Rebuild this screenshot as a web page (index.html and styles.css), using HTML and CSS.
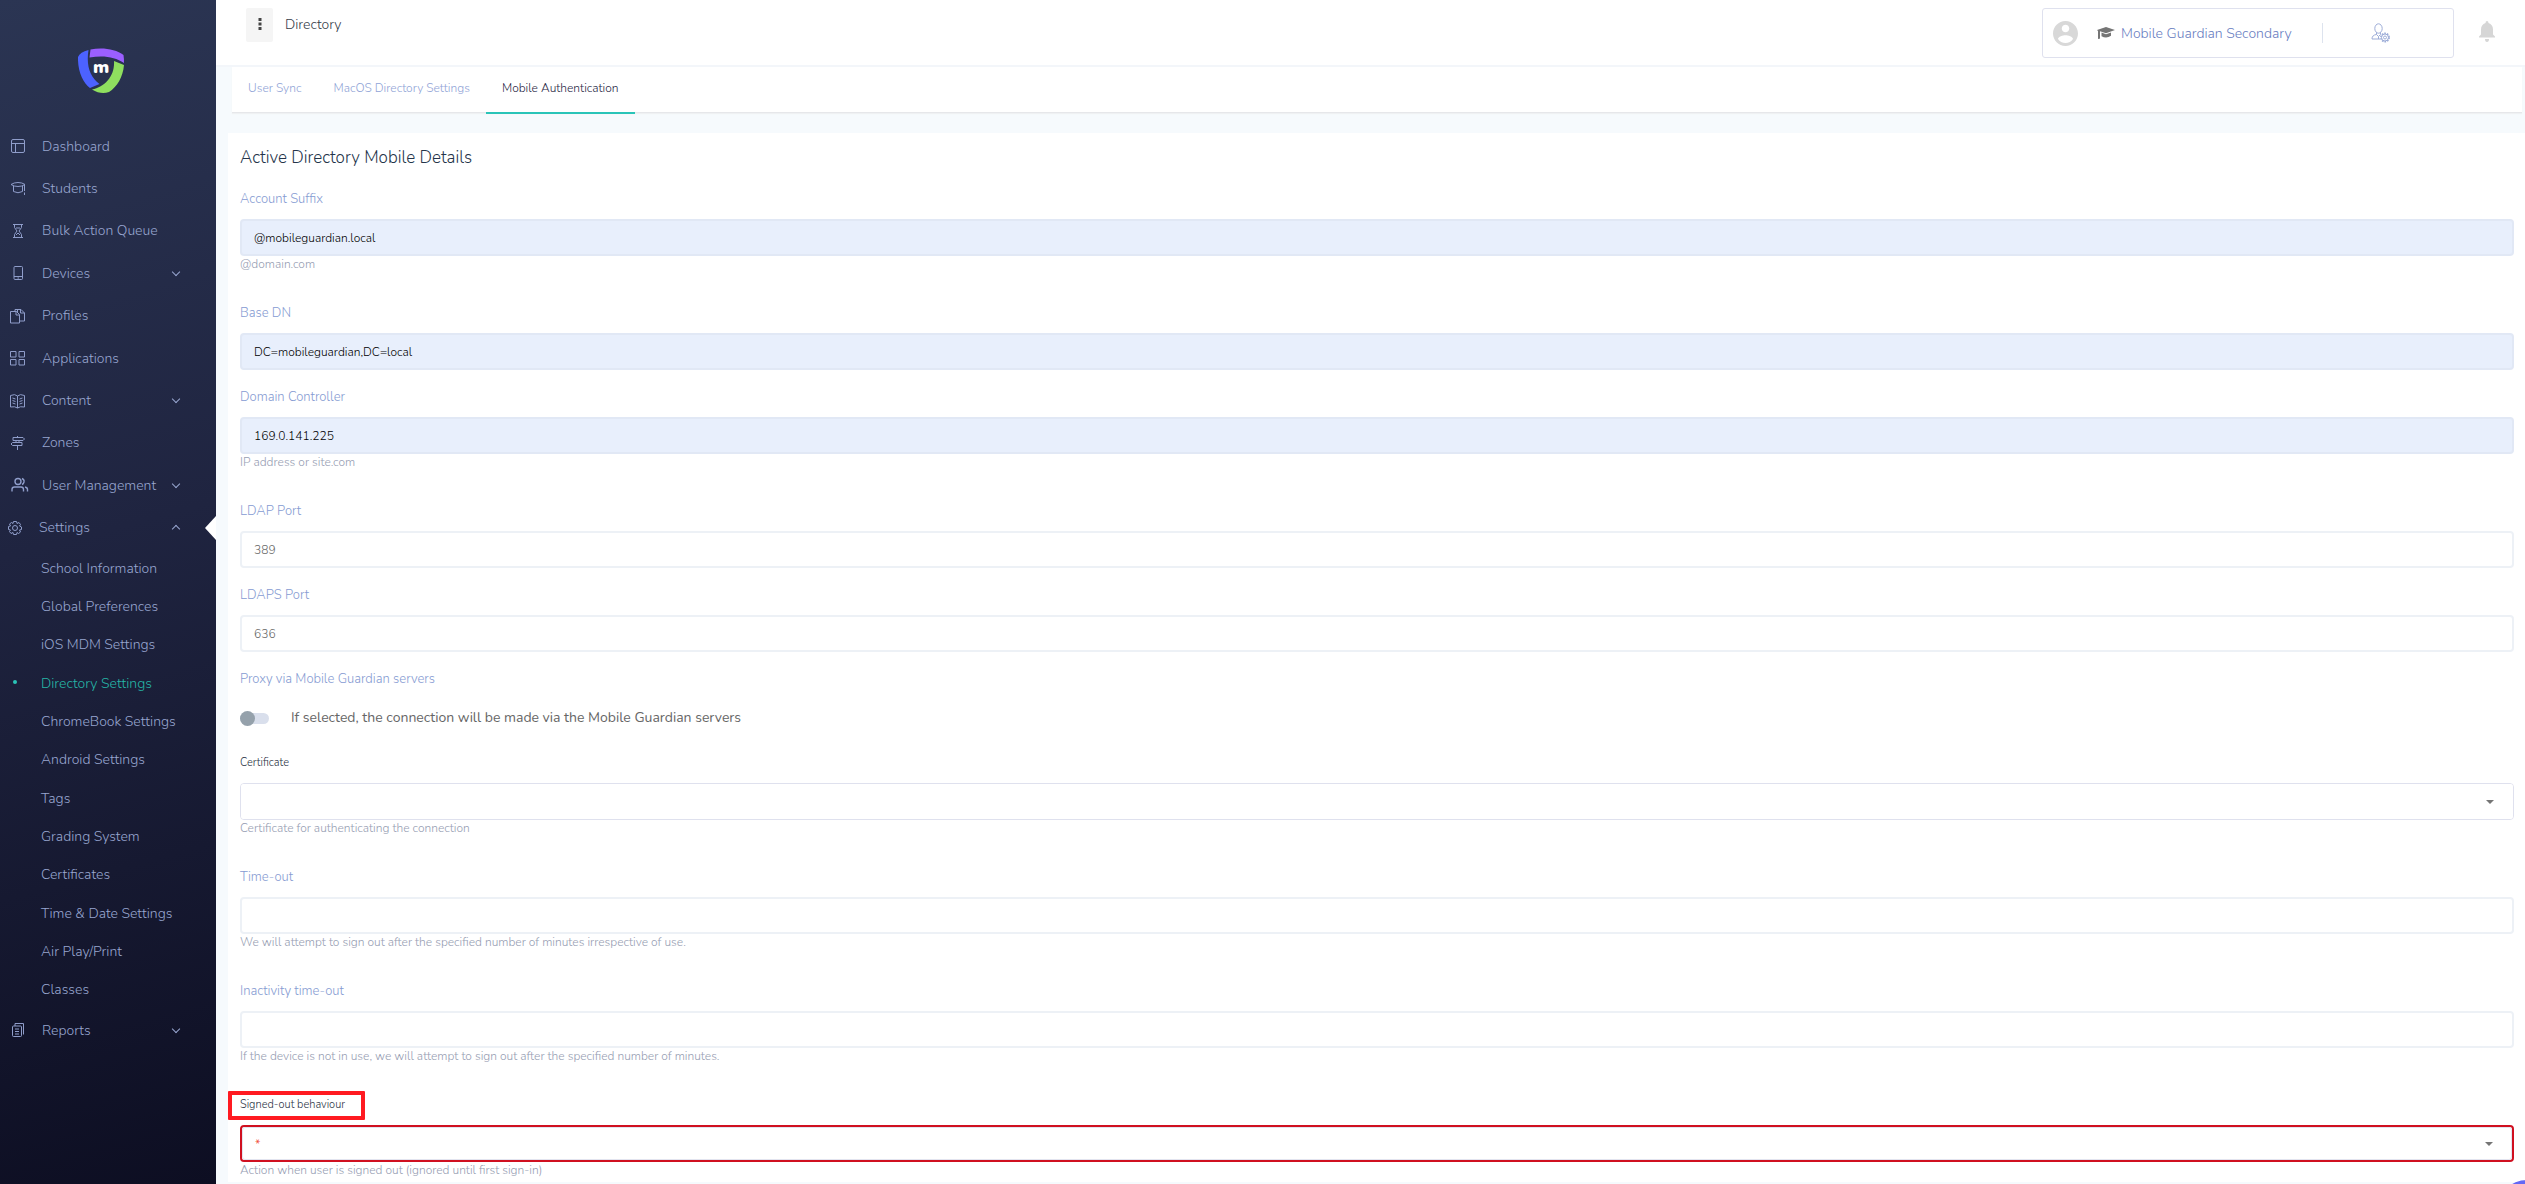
FILE: index.html
```html
<!DOCTYPE html>
<html lang="en">
<head>
<meta charset="utf-8">
<title>Directory</title>
<link rel="stylesheet" href="styles.css">
</head>
<body>
<aside class="sidebar">
  <a class="logo" href="#" aria-label="Home">
    <svg width="46" height="46" viewBox="0 0 46 46">
      <path d="M10.500 2Q2 4 0 9C-.5 23 5 35 12 40L21.500 36C12 29 8 18 10.500 2Z" fill="#4c62ff"/>
      <path d="M12.500 1.500C24-1 38 1 45.500 7Q46 10 46 15C37 9 26 7 11.500 9.500Z" fill="#9b5fff"/>
      <path d="M36 13L46 17C45 29 39 39 31 44Q23 47 14 41.500C27 39 37 28 36 13Z" fill="#8fdf5f"/>
      <text class="logo-letter" x="23" y="25" text-anchor="middle">m</text>
    </svg>
  </a>
  <nav class="nav">
    <ul class="nav-list nav-main">
      <li><a href="#"><svg viewBox="0 0 16 16"><rect x="1.500" y="1.500" width="13" height="13" rx="1.500"/><path d="M1.500 5.500H14.500M5.500 5.500V14.500"/></svg>Dashboard</a></li>
      <li><a href="#"><svg viewBox="0 0 16 16"><path d="M1 3.500Q4 1.500 8 1.500T15 3.500Q12 5.500 8 5.500T1 3.500ZM3.500 5V10.500Q8 13 12.500 10.500V5M14.500 4V10M14.500 11.500V14"/></svg>Students</a></li>
      <li><a href="#"><svg viewBox="0 0 16 16"><path d="M3 1.500H13M3 14.500H13M4.500 1.500V4.500L7 8L4.500 11.500V14.500M11.500 1.500V4.500L9 8L11.500 11.500V14.500M6 5H10M6 12L8 10L10 12"/></svg>Bulk Action Queue</a></li>
      <li><a href="#"><svg viewBox="0 0 16 16"><rect x="4" y="1.500" width="8.500" height="13" rx="1"/><path d="M4 11.500H12.500M7.500 13H9"/></svg>Devices<span class="chevron"></span></a></li>
      <li><a href="#"><svg viewBox="0 0 16 16"><path d="M.500 3.500H6.500L9.500 6.500V15H.500ZM6 3.500V7H9.500M5 3V1.500H11L14.500 5V13H9.500M10.500 1.500V5H14.500M7.500 1.500V4"/></svg>Profiles</a></li>
      <li><a href="#"><svg viewBox="0 0 16 16"><path d="M.500 1.500H6V7H.500ZM9 1.500H14.500V7H9ZM.500 9.500H6V15H.500ZM9 9.500H14.500V15H9Z"/></svg>Applications</a></li>
      <li><a href="#"><svg viewBox="0 0 16 16"><path d="M.500 2.500Q5 .500 7.500 3Q10 .500 14.500 2.500V14Q10 13 7.500 15Q5 13 .500 14ZM7.500 3V15M2.500 5L5.500 6M2.500 7.500L5.500 8.500M2.500 10L5.500 11M12.500 5L9.500 6M12.500 7.500L9.500 8.500M12.500 10L9.500 11"/></svg>Content<span class="chevron"></span></a></li>
      <li><a href="#"><svg viewBox="0 0 16 16"><path d="M3 2.500H13L14.500 4L13 5.500H3ZM12 7.500H2.500L1 9L2.500 10.500H12ZM7.500 1V2.500M6 5.500V7.500M9 5.500V7.500M7.500 10.500V15"/></svg>Zones</a></li>
      <li><a href="#"><svg class="icon-bold" viewBox="0 0 16 16"><circle cx="8" cy="4.500" r="3"/><path d="M2 14.500V12.500Q2 10 4.500 10H11Q13.500 10 13.500 12.500V14.500M12 1.500Q14.500 2.500 14 5Q13.500 7 12 7.500M15 10Q17.500 10.500 17.500 12.500V14.500"/></svg>User Management<span class="chevron"></span></a></li>
      <li class="nav-open"><a href="#"><svg viewBox="0 0 16 16"><circle cx="8" cy="8" r="2.500"/><path d="M6.500 1.500H9.500L10 3.500L12 2.500L13.500 4.500L12.500 6L14.500 7V9.500L12.500 10L13.500 12L11.500 13.500L10 12.500L9.500 14.500H6.500L6 12.500L4 13.500L2.500 11.500L3.500 10L1.500 9.500V6.500L3.500 6L2.500 4L4.500 2.500L6 3.500Z"/></svg>Settings<span class="chevron chevron-up"></span></a></li>
    </ul>
    <ul class="nav-list nav-sub">
      <li><a href="#">School Information</a></li>
      <li><a href="#">Global Preferences</a></li>
      <li><a href="#">iOS MDM Settings</a></li>
      <li class="nav-active"><a href="#">Directory Settings</a></li>
      <li><a href="#">ChromeBook Settings</a></li>
      <li><a href="#">Android Settings</a></li>
      <li><a href="#">Tags</a></li>
      <li><a href="#">Grading System</a></li>
      <li><a href="#">Certificates</a></li>
      <li><a href="#">Time &amp; Date Settings</a></li>
      <li><a href="#">Air Play/Print</a></li>
      <li><a href="#">Classes</a></li>
    </ul>
    <ul class="nav-list nav-last">
      <li><a href="#"><svg viewBox="0 0 16 16"><rect x="2.500" y="4" width="9" height="10.500" rx="1"/><path d="M5 1.500H13.500V12.500M5 1.500V4M5 7H9M5 9.500H9M5 12H9"/></svg>Reports<span class="chevron"></span></a></li>
    </ul>
  </nav>
</aside>

<div class="page">
  <header class="topbar">
    <button class="menu-button" type="button" aria-label="Menu"><svg width="4" height="12" viewBox="0 0 4 12"><path d="M.500 0h3v3h-3zM.500 4.500h3v3h-3zM.500 9h3v3h-3z" fill="#444"/></svg></button>
    <h1 class="page-title">Directory</h1>
    <div class="account">
      <svg class="avatar" width="25" height="25" viewBox="2 2 20 20"><path fill="#d8d8d8" d="M12 2C6.480 2 2 6.480 2 12s4.480 10 10 10 10-4.480 10-10S17.520 2 12 2zm0 3c1.660 0 3 1.340 3 3s-1.340 3-3 3-3-1.340-3-3 1.340-3 3-3zm0 14.600c-2.500 0-4.710-1.280-6-3.220.03-1.990 4-3.080 6-3.080 1.990 0 5.970 1.090 6 3.080-1.290 1.940-3.500 3.220-6 3.220z"/></svg>
      <a class="school" href="#"><svg width="18" height="14" viewBox="0 0 18 14"><path fill="#757575" d="M9 1L18 4L9 7.200L3 5.200V12.500H3.500L1 13V5L0 4ZM4.500 6.500L9 8.200L14 6.500V9.800Q9.500 13 4.500 10.200Z"/></svg>Mobile Guardian Secondary</a>
      <button class="user-settings" type="button" aria-label="User settings"><svg width="20" height="20" viewBox="0 0 20 20" fill="none" stroke="#9dadd8"><ellipse cx="7.500" cy="5.500" rx="3.700" ry="4.700"/><path d="M5.500 9.500V11.500Q1 12 1 16H9M9.500 9.500V11.500M5.500 11.500L7.500 13.500L9.500 11.500M7.500 13.500V16"/><circle cx="14" cy="14.500" r="4.200" stroke-width="1.500" stroke-dasharray="1.650 1"/><circle cx="14" cy="14.500" r="3.500"/><circle cx="14" cy="14.500" r="1.500"/></svg></button>
    </div>
    <button class="bell" type="button" aria-label="Notifications"><svg width="16" height="21" viewBox="0 0 16 21"><path fill="#d6d6d6" d="M8 0Q9.500 0 9.500 2Q14 3.500 14 8.500V13.500L16 15.500V16.500H0V15.500L2 13.500V8.500Q2 3.500 6.500 2Q6.500 0 8 0ZM6 18H10Q10 21 8 21T6 18Z"/></svg></button>
  </header>

  <main>
    <nav class="tabs">
      <a class="tab" href="#">User Sync</a>
      <a class="tab" href="#">MacOS Directory Settings</a>
      <a class="tab tab-active" href="#">Mobile Authentication</a>
    </nav>

    <form class="card">
      <h2 class="card-title">Active Directory Mobile Details</h2>

      <div class="field">
        <label for="suffix">Account Suffix</label>
        <input class="control filled" id="suffix" type="text" value="@mobileguardian.local">
        <p class="hint">@domain.com</p>
      </div>
      <div class="field">
        <label for="base-dn">Base DN</label>
        <input class="control filled" id="base-dn" type="text" value="DC=mobileguardian,DC=local">
      </div>
      <div class="field">
        <label for="controller">Domain Controller</label>
        <input class="control filled" id="controller" type="text" value="169.0.141.225">
        <p class="hint">IP address or site.com</p>
      </div>
      <div class="field">
        <label for="ldap">LDAP Port</label>
        <input class="control" id="ldap" type="text" placeholder="389">
      </div>
      <div class="field">
        <label for="ldaps">LDAPS Port</label>
        <input class="control" id="ldaps" type="text" placeholder="636">
      </div>
      <div class="field">
        <label class="label-tight" for="proxy">Proxy via Mobile Guardian servers</label>
        <label class="switch-row" for="proxy"><input class="switch" id="proxy" type="checkbox">If selected, the connection will be made via the Mobile Guardian servers</label>
      </div>
      <div class="field">
        <label class="label-dark" for="certificate">Certificate</label>
        <div class="select-box"><select id="certificate"><option></option></select></div>
        <p class="hint">Certificate for authenticating the connection</p>
      </div>
      <div class="field">
        <label for="timeout">Time-out</label>
        <input class="control" id="timeout" type="text">
        <p class="hint">We will attempt to sign out after the specified number of minutes irrespective of use.</p>
      </div>
      <div class="field">
        <label for="inactivity">Inactivity time-out</label>
        <input class="control" id="inactivity" type="text">
        <p class="hint">If the device is not in use, we will attempt to sign out after the specified number of minutes.</p>
      </div>
      <div class="field field-marked">
        <label class="label-dark" for="behaviour">Signed-out behaviour</label>
        <div class="select-box select-error"><select id="behaviour"><option>*</option></select></div>
        <p class="hint">Action when user is signed out (ignored until first sign-in)</p>
      </div>
    </form>
  </main>
</div>
<button class="chat-bubble" type="button" aria-label="Chat"></button>
</body>
</html>
```
FILE: styles.css
```css
*, *::before { box-sizing: border-box; }

body {
  margin: 0;
  display: flex;
  min-height: 100vh;
  background: #f6fafd;
  font-family: Nunito, "Open Sans", sans-serif;
  font-size: 14px;
  font-weight: 300;
}

a { color: inherit; text-decoration: none; }
button { padding: 0; border: 0; background: none; }
ul { margin: 0; padding: 0; list-style: none; }

/* Sidebar */
.sidebar {
  flex: none;
  width: 216px;
  background: linear-gradient(165deg, #2b3553 0%, #1f2440 45%, #0d0e22 100%);
  color: #98a6d0;
}

.logo { display: block; padding: 48px 0 31px 78px; }
.logo svg { display: block; }
.logo-letter { font-size: 18px; font-weight: 900; fill: #fff; }

.nav-list { display: grid; grid-auto-rows: 1fr; }
.nav-main { height: 424px; }
.nav-sub { height: 460px; }
.nav-last { height: 42px; }

.nav-list li { position: relative; display: flex; }
.nav-list a { flex: 1; display: flex; align-items: center; padding: 0 35px 0 10px; }
.nav-list .nav-open a { padding-left: 7px; }
.nav-list.nav-sub a { padding-left: 41px; }

.nav-list svg {
  width: 16px;
  height: 16px;
  margin-right: 16px;
  overflow: visible;
  fill: none;
  stroke: #8f9dca;
}
.nav-list .icon-bold { stroke-width: 1.4; }

.chevron {
  width: 6px;
  height: 6px;
  margin: 0 2px 3px auto;
  border: solid #98a6d0;
  border-width: 0 1px 1px 0;
  transform: rotate(45deg);
}
.chevron-up { margin-bottom: -3px; transform: rotate(225deg); }

.nav-open::after {
  content: "";
  position: absolute;
  right: 0;
  top: 50%;
  margin-top: -12px;
  border: solid transparent;
  border-width: 12px 11px 12px 0;
  border-right-color: #fff;
}

.nav-active { color: #26b5a6; }
.nav-active::before {
  content: "";
  position: absolute;
  left: 13px;
  top: 50%;
  margin-top: -3px;
  width: 4px;
  height: 4px;
  border-radius: 50%;
  background: #2ac4b8;
}

/* Top bar */
.page { flex: 1; min-width: 0; }

.topbar {
  display: flex;
  align-items: flex-start;
  height: 67px;
  padding: 8px 30px;
  background: #fff;
  border-bottom: 2px solid #f3f6fa;
}
.menu-button {
  display: flex;
  align-items: center;
  justify-content: center;
  width: 27px;
  height: 34px;
  padding-bottom: 3px;
  border-radius: 2px;
  background: #f5f5f5;
}
.page-title {
  margin: 7px auto 0 12px;
  color: #363d49;
  font-size: 14px;
  font-weight: 300;
  line-height: 20px;
}
.account {
  display: flex;
  align-items: center;
  width: 412px;
  height: 50px;
  padding-left: 10px;
  border: 1px solid #dfe1ee;
  border-radius: 3px;
}
.school {
  display: flex;
  align-items: center;
  gap: 6px;
  margin-left: 19px;
  color: #687dbf;
}
.user-settings {
  flex: 1;
  height: 20px;
  margin-left: 30px;
  border-left: 1px solid #dde3ee;
}
.user-settings svg { display: block; margin-left: 48px; }
.bell { margin: 13px 0 0 25px; }
.bell svg { display: block; }

/* Tabs */
.tabs {
  display: flex;
  margin: 0 3px 20px 16px;
  height: 46px;
  background: #fff;
  border-bottom: 1px solid #e6e7ea;
  box-shadow: 0 1px 1px #eff1f3;
}
.tab {
  height: 47px;
  padding: 12px 16px 0;
  border-bottom: 2px solid transparent;
  color: #8fa3d6;
  font-size: 12px;
  line-height: 18px;
}
.tab-active { border-bottom-color: #2ac4b8; color: #1f2644; }

/* Form */
.card {
  margin-left: 12px;
  padding: 13px 11px 4px 12px;
  background: #fff;
}
.card-title {
  margin: 0 0 18px;
  color: #24344a;
  font-size: 17px;
  font-weight: 300;
  line-height: 24px;
}
.field { position: relative; padding-bottom: 16px; }
.field:last-child { padding-bottom: 0; }
.field label {
  display: block;
  margin-bottom: 9px;
  color: #869bd2;
  font-size: 13px;
  line-height: 22px;
}
.field .label-tight { margin-bottom: 0; }
.field .label-dark { color: #1f3042; font-size: 11px; }

.control {
  display: block;
  width: 100%;
  height: 37px;
  padding: 0 12px;
  border: 2px solid #edf1f6;
  border-radius: 4px;
  background: #fff;
  color: #000;
  font: 300 12px Nunito, "Open Sans", sans-serif;
}
.control::placeholder { color: #666; }
.filled { border-color: #e1e8f5; background: #e8effc; }

.hint {
  margin: 0 0 14px;
  color: #969db2;
  font-size: 12px;
  line-height: 16px;
}
.field:last-child .hint { margin-bottom: 0; }

.field .switch-row {
  display: flex;
  align-items: center;
  gap: 22px;
  height: 36px;
  margin: 10px 0 0;
  color: #666;
  font-size: 14px;
  font-weight: 400;
}
.switch {
  appearance: none;
  display: flex;
  align-items: center;
  width: 29px;
  height: 11px;
  margin: 0;
  border-radius: 6px;
  background: #d9dfec;
}
.switch::before {
  content: "";
  width: 15px;
  height: 15px;
  border-radius: 50%;
  background: #95a1ab;
}

.select-box {
  position: relative;
  height: 37px;
  border: 1px solid #dfe1ee;
  border-radius: 4px;
}
.select-box select {
  appearance: none;
  display: block;
  width: 100%;
  height: 100%;
  padding: 0 12px;
  border: 0;
  border-radius: 3px;
  background: #fff;
  color: #f0503c;
  font: 400 12px Nunito, "Open Sans", sans-serif;
}
.select-box::after {
  content: "";
  position: absolute;
  right: 19px;
  top: 50%;
  margin-top: -2px;
  border: solid transparent;
  border-width: 4px 4px 0;
  border-top-color: #757575;
}
.select-error { border: 2px solid #d01020; }
.select-error select { border: 1px solid #e2e4ef; }

/* Highlight frame around the field's label */
.field-marked::before {
  content: "";
  position: absolute;
  left: -12px;
  top: -3px;
  width: 137px;
  height: 29px;
  border: 4px solid #ff1a21;
  border-radius: 1px;
}

.chat-bubble {
  position: fixed;
  right: -32px;
  bottom: -56px;
  width: 60px;
  height: 60px;
  border-radius: 50%;
  background: #6468f5;
}
```
